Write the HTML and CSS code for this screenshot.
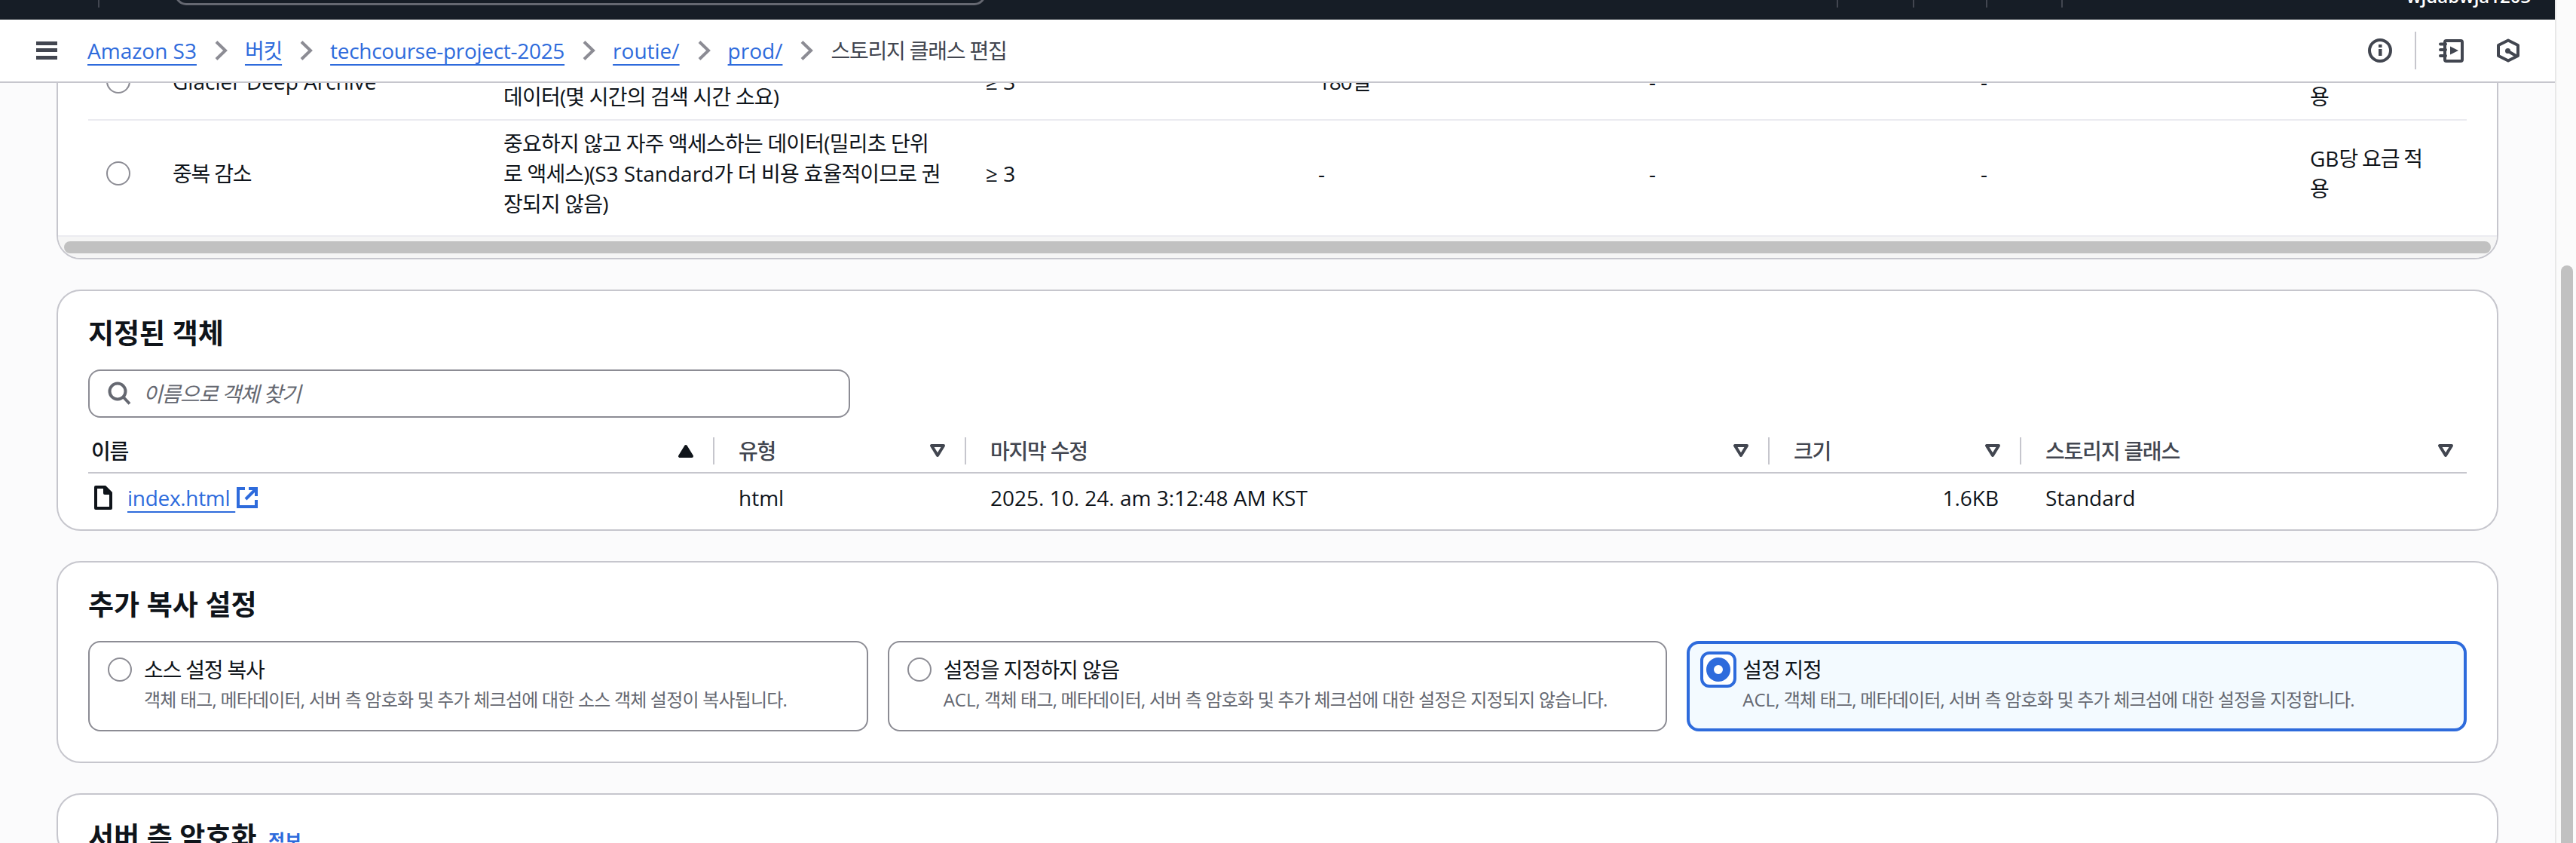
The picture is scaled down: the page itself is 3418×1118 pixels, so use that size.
FILE: index.html
```html
<!DOCTYPE html>
<html lang="ko">
<head>
  <meta charset="UTF-8" />
  <title>스토리지 클래스 편집</title>
  <link rel="stylesheet" href="styles.css">
</head>
<body>
  <div class="app">
    <div class="topbar">
      <span class="tb-divider tb-first"></span>
      <span class="tb-search"></span>
      <span class="tb-divider tb-second"></span>
      <span class="tb-divider tb-third"></span>
      <span class="tb-divider tb-fourth"></span>
      <span class="tb-divider tb-fifth"></span>
      <span class="tb-user">wjdabwja1203</span>
    </div>

    <div class="crumbbar">
      <svg class="menu-icon" width="28" height="24" viewBox="0 0 28 24"><rect width="28" height="5" y="0"/><rect width="28" height="5" y="9"/><rect width="28" height="5" y="19"/></svg>
      <nav class="crumbs">
        <a class="link">Amazon S3</a>
        <svg class="chevron" width="18" height="26" viewBox="0 0 18 26"><path d="M3 1.5L15 13 3 24.5"/></svg>
        <a class="link ko">버킷</a>
        <svg class="chevron" width="18" height="26" viewBox="0 0 18 26"><path d="M3 1.5L15 13 3 24.5"/></svg>
        <a class="link tight">techcourse-project-2025</a>
        <svg class="chevron" width="18" height="26" viewBox="0 0 18 26"><path d="M3 1.5L15 13 3 24.5"/></svg>
        <a class="link">routie/</a>
        <svg class="chevron" width="18" height="26" viewBox="0 0 18 26"><path d="M3 1.5L15 13 3 24.5"/></svg>
        <a class="link">prod/</a>
        <svg class="chevron" width="18" height="26" viewBox="0 0 18 26"><path d="M3 1.5L15 13 3 24.5"/></svg>
        <span class="crumb-current ko">스토리지 클래스 편집</span>
      </nav>
      <div class="crumb-tools">
        <svg class="tool-icon" width="32" height="32" viewBox="0 0 32 32"><circle cx="16" cy="16" r="14"/><rect class="solid" x="14" y="14" width="4.5" height="9"/><rect class="solid" x="14" y="8" width="4.5" height="4"/></svg>
        <span class="tool-divider"></span>
        <svg class="tool-icon" width="33" height="32" viewBox="0 0 33 32"><rect x="8" y="3" width="23" height="27" rx="2"/><path d="M2 7.5h7M2 15h7M2 23h7"/><polygon class="solid" points="15,10.5 26,16 15,21.5"/></svg>
        <svg class="tool-icon hex" width="30" height="32" viewBox="0 0 30 32"><polygon points="15,2.5 28,9 28,23 15,29.5 2,23 2,9"/><circle class="solid" cx="14.5" cy="16.5" r="3.5"/><path d="M15 17l9.5 5.5"/></svg>
      </div>
    </div>

    <main class="scroll-area">
      <section class="card card-classes">
        <div class="class-table-wrap">
          <table class="class-table">
            <colgroup>
              <col class="c-radio"><col class="c-name"><col class="c-desc"><col class="c-az"><col class="c-min"><col class="c-size"><col class="c-fee"><col class="c-fee2">
            </colgroup>
            <tr>
              <td><span class="radio"></span></td>
              <td>Glacier Deep Archive</td>
              <td class="desc">거의 액세스하지 않는 장기 아카이브<br>데이터(몇 시간의 검색 시간 소요)</td>
              <td>≥ 3</td>
              <td class="ko">180일</td>
              <td>-</td>
              <td>-</td>
              <td class="ko"><span class="latin">GB</span>당 요금 적<br>용</td>
            </tr>
            <tr class="last">
              <td><span class="radio"></span></td>
              <td class="ko">중복 감소</td>
              <td class="desc">중요하지 않고 자주 액세스하는 데이터(밀리초 단위<br>로 액세스)(<span class="latin">S3 Standard</span>가 더 비용 효율적이므로 권<br>장되지 않음)</td>
              <td>≥ 3</td>
              <td>-</td>
              <td>-</td>
              <td>-</td>
              <td class="ko"><span class="latin">GB</span>당 요금 적<br>용</td>
            </tr>
          </table>
        </div>
        <div class="hscroll"><div class="hscroll-thumb"></div></div>
      </section>

      <section class="card">
        <h2>지정된 객체</h2>
        <div class="search">
          <svg class="search-icon" width="32" height="32" viewBox="0 0 32 32"><circle cx="13" cy="13" r="10.5"/><path d="M20.5 20.5L29 29.5"/></svg>
          <span class="placeholder ko">이름으로 객체 찾기</span>
        </div>
        <table class="object-table">
          <colgroup>
            <col class="o-name"><col class="o-type"><col class="o-date"><col class="o-size"><col class="o-class">
          </colgroup>
          <thead>
            <tr>
              <th class="sorted">
                <div class="th-inner">이름
                  <svg class="sort-icon" width="32" height="32" viewBox="0 0 32 32"><polygon class="asc" points="8,23 24,23 16,10"/></svg>
                </div>
              </th>
              <th>
                <div class="th-inner">유형
                  <svg class="sort-icon" width="32" height="32" viewBox="0 0 32 32"><polygon points="8,9 24,9 16,22"/></svg>
                </div>
              </th>
              <th>
                <div class="th-inner">마지막 수정
                  <svg class="sort-icon" width="32" height="32" viewBox="0 0 32 32"><polygon points="8,9 24,9 16,22"/></svg>
                </div>
              </th>
              <th>
                <div class="th-inner">크기
                  <svg class="sort-icon" width="32" height="32" viewBox="0 0 32 32"><polygon points="8,9 24,9 16,22"/></svg>
                </div>
              </th>
              <th class="th-last">
                <div class="th-inner">스토리지 클래스
                  <svg class="sort-icon" width="32" height="32" viewBox="0 0 32 32"><polygon points="8,9 24,9 16,22"/></svg>
                </div>
              </th>
            </tr>
          </thead>
          <tbody>
            <tr>
              <td>
                <div class="file-cell">
                  <svg class="file-icon" width="24" height="32" viewBox="0 0 24 32"><path d="M2 2h12l8 8v20H2z"/><path class="fold" d="M14 2v8h8z"/></svg>
                  <a class="link file-link">index.html&nbsp;</a>
                  <svg class="ext-icon" width="28" height="28" viewBox="0 0 28 28"><path d="M11 2H2v24h24v-9"/><path d="M12 16L24 4"/><path d="M16 2h10v10"/></svg>
                </div>
              </td>
              <td>html</td>
              <td>2025. 10. 24. am 3:12:48 AM KST</td>
              <td class="num">1.6KB</td>
              <td>Standard</td>
            </tr>
          </tbody>
        </table>
      </section>

      <section class="card">
        <h2>추가 복사 설정</h2>
        <div class="tiles">
          <div class="tile">
            <span class="radio"></span>
            <div>
              <div class="tile-label ko">소스 설정 복사</div>
              <div class="tile-desc">객체 태그, 메타데이터, 서버 측 암호화 및 추가 체크섬에 대한 소스 객체 설정이 복사됩니다.</div>
            </div>
          </div>
          <div class="tile">
            <span class="radio"></span>
            <div>
              <div class="tile-label ko">설정을 지정하지 않음</div>
              <div class="tile-desc"><span class="latin">ACL,</span> 객체 태그, 메타데이터, 서버 측 암호화 및 추가 체크섬에 대한 설정은 지정되지 않습니다.</div>
            </div>
          </div>
          <div class="tile tile-selected">
            <span class="radio-ring"><span class="radio radio-on"></span></span>
            <div>
              <div class="tile-label ko">설정 지정</div>
              <div class="tile-desc"><span class="latin">ACL,</span> 객체 태그, 메타데이터, 서버 측 암호화 및 추가 체크섬에 대한 설정을 지정합니다.</div>
            </div>
          </div>
        </div>
      </section>

      <section class="card">
        <h2>서버 측 암호화 <a class="info-link">정보</a></h2>
      </section>
    </main>
  </div>

  <div class="page-scrollbar"><div class="page-thumb"></div></div>
</body>
</html>
```

FILE: styles.css
```css
* {
  box-sizing: border-box;
}

body {
  margin: 0;
  height: 100vh;
  overflow: hidden;
  display: flex;
  font-family: "Open Sans", "Noto Sans CJK KR", sans-serif;
  font-size: 28px;
  line-height: 40px;
  color: #0f141a;
  background: #fbfbfc;
}

/* hangul runs sit tighter in the shot than Noto's default advance */
.ko {
  letter-spacing: -1.2px;
}

.latin {
  letter-spacing: 0;
}

.tight {
  letter-spacing: -0.3px;
}

.app {
  flex: 1;
  min-width: 0;
  display: flex;
  flex-direction: column;
}

/* top navigation, scrolled almost out of the shot */
.topbar {
  height: 26px;
  flex: none;
  display: flex;
  align-items: flex-start;
  overflow: hidden;
  background: #161d26;
}

.tb-divider {
  width: 2px;
  height: 10px;
  background: #424650;
}

.tb-first { margin-left: 130px; }
.tb-second { margin-left: 1129px; }
.tb-third { margin-left: 99px; }
.tb-fourth { margin-left: 95px; }
.tb-fifth { margin-left: 98px; }

.tb-search {
  width: 1076px;
  height: 30px;
  margin: -23px 0 0 100px;
  border: 3px solid #656871;
  border-radius: 16px;
}

.tb-user {
  margin: -25px 0 0 456px;
  font-size: 24px;
  font-weight: 600;
  color: #fff;
}

/* breadcrumbs */
.crumbbar {
  height: 84px;
  flex: none;
  display: flex;
  align-items: center;
  padding: 0 47px 0 48px;
  background: #fff;
  border-bottom: 2px solid #c6c6cd;
}

.menu-icon {
  margin-right: 40px;
  fill: #424650;
}

.crumbs {
  display: flex;
  align-items: center;
  gap: 23px;
}

.link {
  color: #2e6bdc;
  text-decoration: underline;
  text-decoration-thickness: 2px;
  text-underline-offset: 7px;
  text-decoration-skip-ink: none;
}

.chevron {
  fill: none;
  stroke: #8c8c94;
  stroke-width: 4;
}

.crumb-current {
  color: #424650;
}

.crumb-tools {
  margin-left: auto;
  display: flex;
  align-items: center;
  gap: 30px;
}

.tool-icon {
  fill: none;
  stroke: #424650;
  stroke-width: 4;
  stroke-linecap: round;
  stroke-linejoin: round;
}

.tool-icon .solid {
  fill: #424650;
  stroke: none;
}

.tool-icon.hex {
  margin-left: 14px;
}

.tool-divider {
  width: 2px;
  height: 50px;
  background: #c6c6cd;
}

/* the page, held at its scroll position */
.scroll-area {
  flex: 1;
  min-height: 0;
  overflow: hidden;
  padding: 0 75px;
}

.card {
  padding: 34px 40px 0;
  margin-bottom: 40px;
  background: #fff;
  border: 2px solid #c6c6cd;
  border-radius: 32px;
}

.card-classes {
  margin-top: -52px;
  padding: 0;
  overflow: hidden;
}

h2 {
  margin: 0;
  font-size: 37px;
  line-height: 44px;
  font-weight: 700;
}

.info-link {
  margin-left: 6px;
  font-size: 24px;
  font-weight: 700;
  color: #2e6bdc;
}

/* storage class table */
.class-table-wrap {
  padding: 0 40px;
}

.class-table {
  width: 3156px;
  table-layout: fixed;
  border-collapse: separate;
  border-spacing: 0;
}

.c-radio { width: 88px; }
.c-name { width: 439px; }
.c-desc { width: 640px; }
.c-az { width: 441px; }
.c-min { width: 439px; }
.c-size { width: 440px; }
.c-fee { width: 437px; }
.c-fee2 { width: 232px; }

.class-table td {
  padding: 8px 24px 10px;
  border-bottom: 2px solid #ebebf0;
  vertical-align: middle;
}

.class-table .desc {
  letter-spacing: -0.8px;
}

.class-table .last td {
  padding: 10px 24px 22px;
  border-bottom: none;
}

.radio {
  display: block;
  flex: none;
  width: 32px;
  height: 32px;
  background: #fff;
  border: 2px solid #8c8c94;
  border-radius: 50%;
}

.radio-on {
  border: 10px solid #2e6bdc;
}

.radio-ring {
  flex: none;
  align-self: flex-start;
  display: block;
  margin: -8px;
  padding: 4px;
  background: #fff;
  border: 4px solid #2e6bdc;
  border-radius: 12px;
}

.hscroll {
  height: 30px;
  padding: 6px 8px;
  background: #f5f5f5;
  border-top: 2px solid #ebebf0;
}

.hscroll-thumb {
  height: 16px;
  background: #c1c1c1;
  border-radius: 8px;
}

/* objects */
.search {
  display: flex;
  align-items: center;
  gap: 15px;
  width: 1011px;
  height: 64px;
  margin-top: 26px;
  padding: 0 24px;
  border: 2px solid #8c8c94;
  border-radius: 16px;
}

.search-icon {
  fill: none;
  stroke: #656871;
  stroke-width: 4;
}

.placeholder {
  font-style: italic;
  color: #656871;
}

.object-table {
  width: 3156px;
  margin-top: 26px;
  table-layout: fixed;
  border-collapse: separate;
  border-spacing: 0;
}

.o-name { width: 831px; }
.o-type { width: 334px; }
.o-date { width: 1066px; }
.o-size { width: 334px; }
.o-class { width: 591px; }

.object-table th {
  padding: 0 0 10px;
  border-bottom: 2px solid #c6c6cd;
  font-weight: 500;
  text-align: left;
  letter-spacing: -1.2px;
  color: #424650;
}

.object-table th.sorted {
  color: #0f141a;
}

.th-inner {
  display: flex;
  align-items: center;
  justify-content: space-between;
  height: 36px;
  padding: 0 20px 0 32px;
  border-right: 2px solid #c6c6cd;
}

.sorted .th-inner {
  padding-left: 4px;
}

.th-last .th-inner {
  padding-right: 12px;
  border-right: none;
}

.sort-icon {
  fill: none;
  stroke: #424650;
  stroke-width: 4;
  stroke-linejoin: round;
}

.sort-icon .asc {
  fill: #0f141a;
  stroke: #0f141a;
}

.object-table td {
  padding: 12px 32px 22px;
}

.object-table td.num {
  padding-right: 30px;
  text-align: right;
}

.object-table td:first-child {
  padding-left: 8px;
}

.file-cell {
  display: flex;
  align-items: center;
}

.file-link {
  letter-spacing: -0.3px;
}

.file-icon {
  margin-right: 20px;
  fill: #fff;
  stroke: #0f141a;
  stroke-width: 4;
  stroke-linejoin: round;
}

.file-icon .fold {
  fill: #0f141a;
}

.ext-icon {
  margin-left: 2px;
  fill: none;
  stroke: #2e6bdc;
  stroke-width: 4;
}

/* tiles */
.tiles {
  display: grid;
  grid-template-columns: repeat(3, 1fr);
  gap: 26px;
  margin: 26px 0 40px;
}

.tile {
  display: flex;
  gap: 16px;
  height: 120px;
  padding: 16px 24px;
  border: 2px solid #8c8c94;
  border-radius: 16px;
}

.tile .radio {
  margin-top: 4px;
}

.tile .radio-ring {
  margin-top: -4px;
}

.tile-selected {
  padding: 14px 22px;
  background: #f3faff;
  border: 4px solid #2e6bdc;
}

.tile .radio-ring .radio {
  margin-top: 0;
}

.tile-desc {
  margin-top: 4px;
  font-size: 24px;
  line-height: 32px;
  letter-spacing: -0.8px;
  color: #656871;
}

/* browser scrollbar */
.page-scrollbar {
  width: 28px;
  flex: none;
  padding: 352px 4px 0 6px;
  background: #fbfbfb;
  border-left: 2px solid #e8e8e8;
}

.page-thumb {
  height: 800px;
  background: #c1c1c1;
  border-radius: 8px;
}
```
